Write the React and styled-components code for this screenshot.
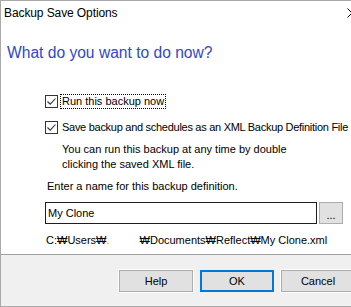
import React from 'react';
import styled, { createGlobalStyle } from 'styled-components';

const GlobalStyle = createGlobalStyle`
  html, body {
    margin: 0;
    padding: 0;
    background: #ffffff;
  }
  * {
    box-sizing: border-box;
  }
`;

const Window = styled.div`
  width: 351px;
  height: 307px;
  overflow: hidden;
  display: flex;
  flex-direction: column;
  background: #ffffff;
  border-top: 1px solid #a9a9a9;
  border-left: 1px solid #a9a9a9;
  border-bottom: 1px solid #a9a9a9;
  font-family: "Liberation Sans", Arial, sans-serif;
  font-size: 11px;
  color: #000000;
`;

const TitleBar = styled.div`
  height: 26px;
  flex-shrink: 0;
  display: flex;
  align-items: center;
  justify-content: space-between;
  padding-left: 3px;
`;

const TitleText = styled.span`
  font-size: 12px;
  letter-spacing: -0.1px;
  margin-top: -2px;
`;

const CloseGlyph = styled.svg`
  margin-right: -6px;
  margin-top: -3px;
`;

const Body = styled.div`
  flex: 1;
  display: flex;
  flex-direction: column;
  padding-left: 44px;
`;

const Heading = styled.h1`
  margin: 16px 0 0 -38px;
  font-size: 15.6px;
  line-height: 20px;
  font-weight: normal;
  color: #3048c8;
`;

const CheckRow = styled.label`
  display: flex;
  align-items: center;
  height: 16px;
  margin-top: ${p => p.$top}px;
  gap: 2px;
`;

const Box = styled.span`
  width: 13px;
  height: 13px;
  border: 1px solid #333333;
  background: #ffffff;
  display: flex;
  align-items: center;
  justify-content: center;
  flex-shrink: 0;
`;

const CheckLabel = styled.span`
  padding: 0 1px;
  line-height: 13px;
  border: 1px dotted ${p => (p.$focused ? '#000000' : 'transparent')};
  letter-spacing: ${p => (p.$tight ? '-0.28px' : '0')};
  white-space: nowrap;
`;

const Note = styled.p`
  margin: 7px 0 0 17px;
  line-height: 15px;
`;

const Prompt = styled.p`
  margin: 7px 0 0 2px;
  line-height: 15px;
`;

const InputRow = styled.div`
  display: flex;
  gap: 2px;
  margin-top: 8px;
`;

const NameInput = styled.div`
  width: 272px;
  height: 22px;
  border: 1px solid #1e1e1e;
  padding-left: 2px;
  display: flex;
  align-items: center;
`;

const BrowseButton = styled.div`
  width: 24px;
  height: 22px;
  background: #e1e1e1;
  border: 1px solid #adadad;
  display: flex;
  align-items: center;
  justify-content: center;
  padding-top: 3px;
`;

const PathLine = styled.div`
  margin: 9px 0 0 1px;
  line-height: 15px;
  white-space: nowrap;
`;

const Blank = styled.span`
  display: inline-block;
  width: 30px;
`;

const Redacted = styled.span`
  color: #e08a3c;
`;

const Footer = styled.div`
  height: 52px;
  flex-shrink: 0;
  background: #f0f0f0;
  border-top: 1px solid #a0a0a0;
  display: flex;
  align-items: flex-start;
  gap: 7px;
  padding: 15px 0 0 118px;
`;

const Button = styled.div`
  width: 74px;
  height: 22px;
  flex-shrink: 0;
  background: #e1e1e1;
  border: ${p => (p.$primary ? '2px solid #0078d7' : '1px solid #adadad')};
  outline: ${p => (p.$primary ? 'none' : '1px solid #ffffff')};
  display: flex;
  align-items: center;
  justify-content: center;
`;

const Check = () => (
  <svg width="11" height="11" viewBox="0 0 11 11">
    <path d="M1.5 5.5 L4.2 8.2 L9.5 2.5" fill="none" stroke="#333333" strokeWidth="1.1" />
  </svg>
);

export default function App() {
  return (
    <>
      <GlobalStyle />
      <Window>
        <TitleBar>
          <TitleText>Backup Save Options</TitleText>
          <CloseGlyph width="10" height="10" viewBox="0 0 10 10">
            <path d="M0.5 0.5 L9.5 9.5 M9.5 0.5 L0.5 9.5" stroke="#000000" strokeWidth="1" />
          </CloseGlyph>
        </TitleBar>
        <Body>
          <Heading>What do you want to do now?</Heading>
          <CheckRow $top={30}>
            <Box><Check /></Box>
            <CheckLabel $focused>Run this backup now</CheckLabel>
          </CheckRow>
          <CheckRow $top={10}>
            <Box><Check /></Box>
            <CheckLabel $tight>Save backup and schedules as an XML Backup Definition File</CheckLabel>
          </CheckRow>
          <Note>
            You can run this backup at any time by double
            <br />
            clicking the saved XML file.
          </Note>
          <Prompt>Enter a name for this backup definition.</Prompt>
          <InputRow>
            <NameInput>My Clone</NameInput>
            <BrowseButton>...</BrowseButton>
          </InputRow>
          <PathLine>
            C:₩Users₩<Redacted>.</Redacted>
            <Blank />
            ₩Documents₩Reflect₩My Clone.xml
          </PathLine>
        </Body>
        <Footer>
          <Button>Help</Button>
          <Button $primary>OK</Button>
          <Button>Cancel</Button>
        </Footer>
      </Window>
    </>
  );
}
